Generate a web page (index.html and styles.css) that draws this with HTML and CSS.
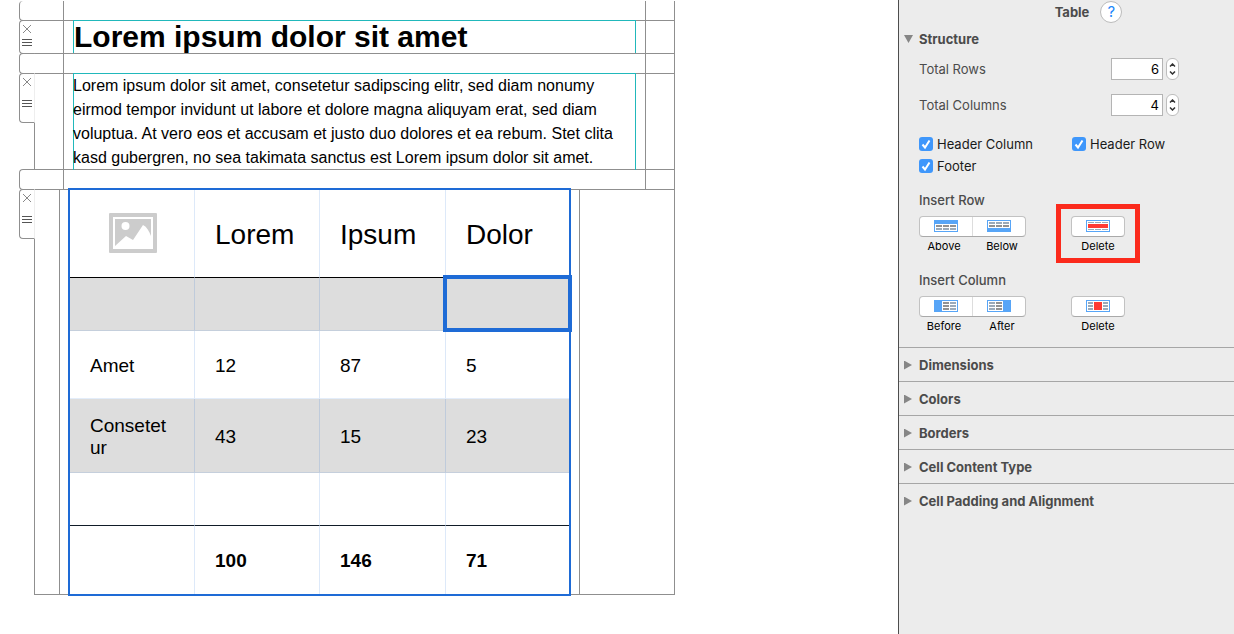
FILE: index.html
```html
<!DOCTYPE html>
<html lang="en">
<head>
    <meta charset="UTF-8">
    <meta name="viewport" content="width=device-width, initial-scale=1.0">
    <title>Table Editor</title>
    <link rel="stylesheet" href="styles.css">
</head>
<body>
    <main class="canvas">
        <div class="block spacer first">
            <div class="tab"></div>
            <div class="block-body"><div class="gutter"></div><div></div><div class="gutter right"></div></div>
        </div>

        <div class="block short">
            <div class="tab">
                <button class="tab-button" aria-label="Remove block"><svg width="10" height="10" viewBox="0 0 10 10"><path d="M1 1l8 8M9 1l-8 8"/></svg></button>
                <button class="tab-button move" aria-label="Move block"><svg width="10" height="8" viewBox="0 0 10 8"><path d="M0 .5h10M0 3.5h10M0 6.5h10"/></svg></button>
            </div>
            <div class="block-body">
                <div class="gutter"></div>
                <h1 class="content">Lorem ipsum dolor sit amet</h1>
                <div class="gutter right"></div>
            </div>
        </div>

        <div class="block spacer">
            <div class="tab"></div>
            <div class="block-body"><div class="gutter"></div><div></div><div class="gutter right"></div></div>
        </div>

        <div class="block tall">
            <div class="tab">
                <button class="tab-button" aria-label="Remove block"><svg width="10" height="10" viewBox="0 0 10 10"><path d="M1 1l8 8M9 1l-8 8"/></svg></button>
                <button class="tab-button move" aria-label="Move block"><svg width="10" height="8" viewBox="0 0 10 8"><path d="M0 .5h10M0 3.5h10M0 6.5h10"/></svg></button>
            </div>
            <div class="block-body">
                <div class="gutter"></div>
                <p class="content">Lorem ipsum dolor sit amet, consetetur sadipscing elitr, sed diam nonumy eirmod tempor invidunt ut labore et dolore magna aliquyam erat, sed diam voluptua. At vero eos et accusam et justo duo dolores et ea rebum. Stet clita kasd gubergren, no sea takimata sanctus est Lorem ipsum dolor sit amet.</p>
                <div class="gutter right"></div>
            </div>
        </div>

        <div class="block spacer">
            <div class="tab"></div>
            <div class="block-body"><div class="gutter"></div><div></div><div class="gutter right"></div></div>
        </div>

        <div class="block tall table-block">
            <div class="tab">
                <button class="tab-button" aria-label="Remove block"><svg width="10" height="10" viewBox="0 0 10 10"><path d="M1 1l8 8M9 1l-8 8"/></svg></button>
                <button class="tab-button move" aria-label="Move block"><svg width="10" height="8" viewBox="0 0 10 8"><path d="M0 .5h10M0 3.5h10M0 6.5h10"/></svg></button>
            </div>
            <div class="block-body">
                <div class="gutter"></div>
                <div class="table-wrap">
                    <table>
                        <thead>
                            <tr>
                                <th class="image-cell">
                                    <svg width="48" height="40" viewBox="0 0 48 40" role="img" aria-label="Image placeholder">
                                        <rect width="48" height="40" rx="1" fill="#ccc"/>
                                        <rect x="5" y="5" width="38" height="30" fill="none" stroke="#fff" stroke-width="2"/>
                                        <circle cx="16.500" cy="13" r="4" fill="#fff"/>
                                        <path d="M6 34v-1l11-10 7 4 10-15c4 2 6 6 8 11v11z" fill="#fff"/>
                                    </svg>
                                </th>
                                <th>Lorem</th>
                                <th>Ipsum</th>
                                <th>Dolor</th>
                            </tr>
                        </thead>
                        <tbody>
                            <tr class="empty shaded"><td></td><td></td><td></td><td class="selected"></td></tr>
                            <tr><th>Amet</th><td>12</td><td>87</td><td>5</td></tr>
                            <tr class="double shaded"><th>Consetetur</th><td>43</td><td>15</td><td>23</td></tr>
                            <tr class="empty last"><td></td><td></td><td></td><td></td></tr>
                        </tbody>
                        <tfoot>
                            <tr><td></td><td>100</td><td>146</td><td>71</td></tr>
                        </tfoot>
                    </table>
                </div>
                <div class="gutter right"></div>
            </div>
        </div>
    </main>

    <aside class="inspector">
        <header>
            <h2>Table</h2>
            <button class="help" aria-label="Help">?</button>
        </header>

        <details open>
            <summary>Structure</summary>
            <div class="structure">
                <div class="field">
                    <label for="rows">Total Rows</label>
                    <input type="number" id="rows" value="6">
                    <div class="stepper">
                        <button aria-label="More rows"><svg width="7" height="4" viewBox="0 0 7 4"><path d="M1 3.500l2.500-2.500 2.500 2.500"/></svg></button>
                        <button aria-label="Fewer rows"><svg width="7" height="4" viewBox="0 0 7 4"><path d="M1 .5l2.500 2.500 2.500-2.500"/></svg></button>
                    </div>
                </div>
                <div class="field">
                    <label for="columns">Total Columns</label>
                    <input type="number" id="columns" value="4">
                    <div class="stepper">
                        <button aria-label="More columns"><svg width="7" height="4" viewBox="0 0 7 4"><path d="M1 3.500l2.500-2.500 2.500 2.500"/></svg></button>
                        <button aria-label="Fewer columns"><svg width="7" height="4" viewBox="0 0 7 4"><path d="M1 .5l2.500 2.500 2.500-2.500"/></svg></button>
                    </div>
                </div>

                <div class="checks">
                    <label><span class="check"><input type="checkbox" checked><svg width="14" height="14" viewBox="0 0 14 14"><path d="M3.500 7.500l2.500 3 4.500-7"/></svg></span>Header Column</label>
                    <label><span class="check"><input type="checkbox" checked><svg width="14" height="14" viewBox="0 0 14 14"><path d="M3.500 7.500l2.500 3 4.500-7"/></svg></span>Header Row</label>
                    <label><span class="check"><input type="checkbox" checked><svg width="14" height="14" viewBox="0 0 14 14"><path d="M3.500 7.500l2.500 3 4.500-7"/></svg></span>Footer</label>
                </div>

                <h3>Insert Row</h3>
                <div class="tools">
                    <div class="tool">
                        <div class="segments">
                            <button aria-label="Insert row above">
                                <svg width="24" height="12" viewBox="0 0 24 12">
                                    <rect width="24" height="12" fill="#57a5f7"/>
                                    <rect x="1" y="4" width="22" height="7" fill="#fff"/>
                                    <path d="M2 6h6M9 6h6M16 6h6" stroke="#929292" stroke-width="2"/>
                                    <path d="M2 9h6M9 9h6M16 9h6" stroke="#9baab9" stroke-width="2"/>
                                </svg>
                            </button>
                            <button aria-label="Insert row below">
                                <svg width="24" height="12" viewBox="0 0 24 12">
                                    <rect width="24" height="12" fill="#57a5f7"/>
                                    <rect x="1" y="1" width="22" height="7" fill="#fff"/>
                                    <path d="M2 3h6M9 3h6M16 3h6" stroke="#9baab9" stroke-width="2"/>
                                    <path d="M2 6h6M9 6h6M16 6h6" stroke="#929292" stroke-width="2"/>
                                </svg>
                            </button>
                        </div>
                        <div class="captions"><span>Above</span><span>Below</span></div>
                    </div>
                    <div class="tool single highlighted">
                        <div class="segments">
                            <button aria-label="Delete row">
                                <svg width="24" height="12" viewBox="0 0 24 12">
                                    <rect width="24" height="12" fill="#57a5f7"/>
                                    <rect x="1" y="1" width="22" height="10" fill="#fff"/>
                                    <path d="M2 2.500h6M9 2.500h6M16 2.500h6M2 9.500h6M9 9.500h6M16 9.500h6" stroke="#9baab9"/>
                                    <rect x="2" y="4" width="20" height="4" fill="#ff3b35"/>
                                </svg>
                            </button>
                        </div>
                        <span class="caption">Delete</span>
                    </div>
                </div>

                <h3>Insert Column</h3>
                <div class="tools">
                    <div class="tool">
                        <div class="segments">
                            <button aria-label="Insert column before">
                                <svg width="24" height="12" viewBox="0 0 24 12">
                                    <rect width="24" height="12" fill="#57a5f7"/>
                                    <rect x="8" y="1" width="15" height="10" fill="#fff"/>
                                    <path d="M9 3h6M9 6h6M9 9h6" stroke="#929292" stroke-width="2"/>
                                    <path d="M16 3h6M16 6h6M16 9h6" stroke="#9baab9" stroke-width="2"/>
                                </svg>
                            </button>
                            <button aria-label="Insert column after">
                                <svg width="24" height="12" viewBox="0 0 24 12">
                                    <rect width="24" height="12" fill="#57a5f7"/>
                                    <rect x="1" y="1" width="15" height="10" fill="#fff"/>
                                    <path d="M2 3h6M2 6h6M2 9h6" stroke="#9baab9" stroke-width="2"/>
                                    <path d="M9 3h6M9 6h6M9 9h6" stroke="#929292" stroke-width="2"/>
                                </svg>
                            </button>
                        </div>
                        <div class="captions"><span>Before</span><span>After</span></div>
                    </div>
                    <div class="tool single">
                        <div class="segments">
                            <button aria-label="Delete column">
                                <svg width="24" height="12" viewBox="0 0 24 12">
                                    <rect width="24" height="12" fill="#57a5f7"/>
                                    <rect x="1" y="1" width="22" height="10" fill="#fff"/>
                                    <path d="M2 3h5M2 6h5M2 9h5M17 3h5M17 6h5M17 9h5" stroke="#9baab9" stroke-width="2"/>
                                    <rect x="8" y="2" width="8" height="8" fill="#ff3b35"/>
                                </svg>
                            </button>
                        </div>
                        <span class="caption">Delete</span>
                    </div>
                </div>
            </div>
        </details>
        <details class="section"><summary>Dimensions</summary></details>
        <details class="section"><summary>Colors</summary></details>
        <details class="section"><summary>Borders</summary></details>
        <details class="section"><summary>Cell Content Type</summary></details>
        <details class="section"><summary>Cell Padding and Alignment</summary></details>
    </aside>
</body>
</html>
```
FILE: styles.css
```css
* {
    box-sizing: border-box;
}
body {
    display: flex;
    min-height: 100vh;
    margin: 0;
    background-color: #fff;
    color: #000;
    font-family: "Liberation Sans", Arial, sans-serif;
}
h1, h2, h3, p {
    margin: 0;
}
button {
    padding: 0;
    border: none;
    background: none;
    font-family: inherit;
}
svg {
    display: block;
}

/* editing canvas */
.canvas {
    flex: 1;
    padding: 1px 19px;
}
.block {
    display: flex;
    max-width: 656px;
    margin-bottom: -1px;
}
.tab {
    position: relative;
    display: flex;
    flex-direction: column;
    align-items: center;
    width: 16px;
    margin-right: -1px;
    border: 1px solid #8f8f8f;
    border-right-color: transparent;
    border-radius: 4px 0 0 4px;
}
.block-body {
    display: grid;
    grid-template-columns: 29px 1fr 29px;
    flex: 1;
    border: 1px solid #8f8f8f;
    border-left-color: transparent;
}
.spacer {
    height: 21px;
}
.first {
    height: 20px;
}
.first .tab, .first .block-body {
    border-top: none;
}
.tall .tab {
    height: 50px;
    border-right-color: #eee;
    background-color: #fff;
}
.tall .block-body {
    border-left-color: #8f8f8f;
}
.gutter {
    border-right: 1px solid #8f8f8f;
}
.gutter.right {
    border-right: none;
    border-left: 1px solid #8f8f8f;
}
.tab-button {
    padding: 3px 0;
}
.tab-button svg {
    fill: none;
    stroke: #888;
}
.tab-button.move svg {
    stroke: #555;
}
.short .move {
    padding: 2px 0;
}
.tall .move {
    padding: 10px 0;
}
.content {
    position: relative;
    margin: -1px 9px;
    border: 1px solid #21b8bb;
    border-bottom: none;
}
h1.content {
    margin-bottom: 0;
    font-size: 30px;
    line-height: 32px;
}
p.content {
    border-left: none;
    box-shadow: inset 1px 0 #21b8bb;
    font-size: 16px;
    line-height: 24px;
}

/* the table being edited */
.table-block .block-body {
    grid-template-columns: 25px 1fr 95px;
}
.table-wrap {
    margin: -2px 8px;
}
table {
    position: relative;
    width: 100%;
    border: 2px solid #1e6bd6;
    border-spacing: 0;
    table-layout: fixed;
    background-color: #fff;
    font-size: 19px;
    line-height: 22px;
}
th, td {
    height: 68px;
    padding: 2px 20px 0;
    border-right: 1px solid rgba(30, 107, 214, 0.15);
    border-bottom: 1px solid rgba(30, 107, 214, 0.12);
    font-weight: normal;
    text-align: left;
    word-break: break-all;
}
th:last-child, td:last-child {
    border-right: none;
}
thead th {
    width: 125px;
    height: 88px;
    border-bottom-color: #000;
    font-size: 28px;
    line-height: 32px;
    word-break: normal;
}
thead th:nth-child(3) {
    width: 126px;
}
thead th:last-child {
    width: auto;
}
thead .image-cell {
    padding: 0 20px 2px 22px;
}
.image-cell svg {
    margin: 0 auto;
}
.empty td {
    height: 53px;
}
.double th {
    height: 74px;
}
.shaded {
    background-color: #ddd;
}
.last td {
    border-bottom-color: #111c28;
}
tfoot td {
    border-bottom: none;
    font-weight: bold;
}
.selected {
    position: relative;
}
.selected::after {
    content: "";
    position: absolute;
    inset: -3px -3px -2px;
    border: 4px solid #1e6bd6;
}

/* inspector */
.inspector {
    width: 336px;
    border-left: 1px solid #4d4d4d;
    background-color: #ececec;
    color: #4b4b4b;
    font-family: Inter, "Liberation Sans", sans-serif;
    font-size: 13px;
}
.inspector header {
    display: flex;
    align-items: center;
    justify-content: center;
    gap: 11px;
    height: 24px;
    padding-left: 44px;
}
.inspector h2 {
    font-size: 13px;
    font-weight: 700;
}
.help {
    width: 22px;
    height: 22px;
    border: 1px solid #bbb;
    border-radius: 50%;
    background-color: #fff;
    color: #1b87fb;
    font-size: 15px;
    line-height: 20px;
}
summary {
    display: flex;
    align-items: center;
    height: 30px;
    padding-left: 5px;
    font-weight: 700;
}
summary::before {
    content: "";
    width: 9px;
    height: 8px;
    margin-right: 6px;
    background-color: #868686;
    clip-path: polygon(0 0, 100% 0, 50% 100%);
}
.section {
    border-top: 1px solid #a6a6a6;
}
.section summary {
    height: 33px;
    padding-top: 1px;
}
.section summary::before {
    width: 8px;
    height: 9px;
    margin-right: 7px;
    clip-path: polygon(0 0, 100% 50%, 0 100%);
}
.structure {
    padding: 4px 54px 14px 20px;
}
.field {
    display: flex;
    align-items: center;
    height: 22px;
    margin-bottom: 14px;
    padding-right: 1px;
}
.field label {
    flex: 1;
}
.field input {
    width: 52px;
    height: 22px;
    padding: 0 3px;
    border: 1px solid #b4b4b4;
    background-color: #fff;
    color: #000;
    font-family: inherit;
    font-size: 13px;
    text-align: right;
    appearance: textfield;
}
.field input::-webkit-inner-spin-button {
    display: none;
}
.stepper {
    display: flex;
    flex-direction: column;
    justify-content: space-around;
    width: 13px;
    height: 22px;
    margin-left: 3px;
    padding: 2px 0;
    border: 1px solid #bdbdbd;
    border-radius: 6px;
    background-color: #fff;
}
.stepper svg {
    margin: 0 auto;
    fill: none;
    stroke: #333;
    stroke-width: 1.5;
}
.checks {
    display: grid;
    grid-template-columns: 153px 1fr;
    padding: 3px 0 13px;
    color: #1a1a1a;
}
.checks label {
    display: flex;
    align-items: center;
    gap: 4px;
    height: 22px;
    white-space: nowrap;
}
.check {
    position: relative;
}
.check input {
    display: block;
    width: 14px;
    height: 14px;
    margin: 0;
    border-radius: 3px;
    background-color: #3f97fb;
    appearance: none;
}
.check svg {
    position: absolute;
    inset: 0;
    fill: none;
    stroke: #fff;
    stroke-width: 2;
    pointer-events: none;
}
.inspector h3 {
    margin-bottom: 6px;
    font-size: 13px;
    font-weight: 500;
    line-height: 20px;
}
.tools {
    display: grid;
    grid-template-columns: 152px 54px;
    margin-bottom: 17px;
    color: #000;
    font-size: 11px;
    line-height: 14px;
}
.tools:last-child {
    margin-bottom: 0;
}
.segments {
    display: flex;
    width: 107px;
    height: 21px;
    margin-bottom: 2px;
    border: 1px solid #c2c2c2;
    border-bottom-color: #a9a9a9;
    border-radius: 4px;
    background-color: #fff;
}
.segments button {
    display: flex;
    flex: 1;
    justify-content: center;
    padding-top: 3px;
}
.segments button + button {
    border-left: 1px solid #ddd;
}
.captions {
    display: grid;
    grid-template-columns: 50px 66px;
    text-align: center;
}
.single {
    position: relative;
    text-align: center;
}
.single .segments {
    width: 54px;
}
.caption {
    display: block;
}
.highlighted::after {
    content: "";
    position: absolute;
    inset: -12px -15px -10px -15px;
    border: 5px solid #fb2a1c;
    pointer-events: none;
}
```
